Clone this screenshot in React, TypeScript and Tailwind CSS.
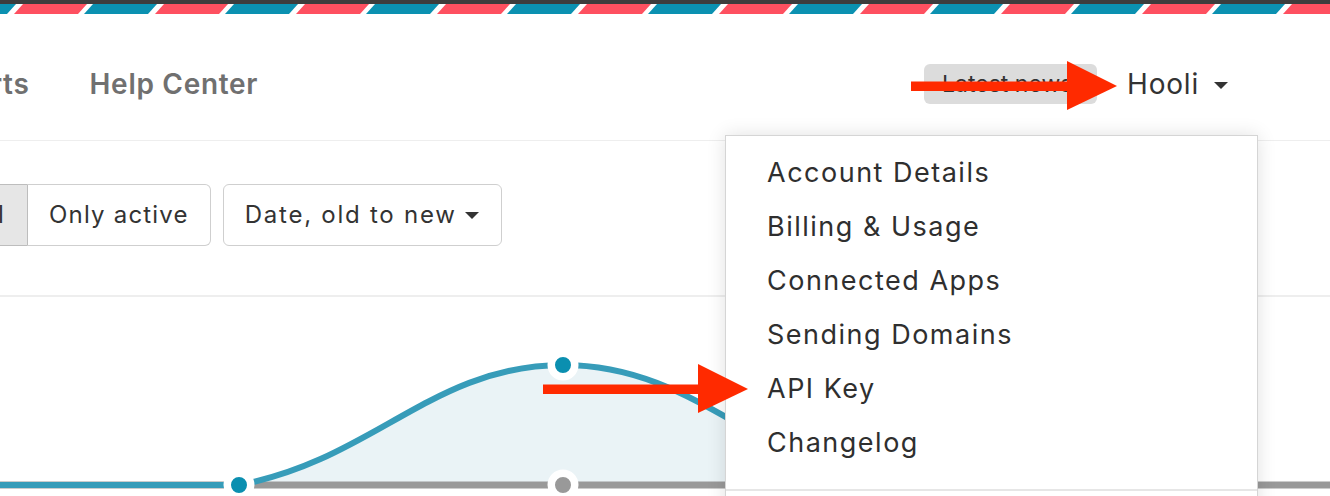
import React from 'react'

const menuItems = ['Account Details', 'Billing & Usage', 'Connected Apps', 'Sending Domains', 'API Key', 'Changelog']

function Stripes() {
  return (
    <svg className="block w-full h-[10px]" height="10">
      <defs>
        <pattern id="air" width="141" height="10" patternUnits="userSpaceOnUse">
          <polygon points="14,10 78,10 87,0 23,0" fill="#fe5060" />
          <polygon points="84,10 148,10 157,0 93,0" fill="#0b91b1" />
          <polygon points="-57,10 7,10 16,0 -48,0" fill="#0b91b1" />
        </pattern>
      </defs>
      <rect width="100%" height="10" fill="url(#air)" />
    </svg>
  )
}

function Caret({ className }: { className?: string }) {
  return (
    <svg className={className} viewBox="0 0 14 7" width="14" height="7">
      <polygon points="0,0 14,0 7,7" fill="#333" />
    </svg>
  )
}

function RedArrow({ className, w }: { className: string; w: number }) {
  // horizontal arrow, head 50px long and 49px tall
  return (
    <svg className={className} width={w} height="50" viewBox={`0 0 ${w} 50`}>
      <rect x="0" y="20.5" width={w - 48} height="9.5" fill="#ff2a00" />
      <polygon points={`${w - 50},0 ${w},25 ${w - 50},49`} fill="#ff2a00" />
    </svg>
  )
}

function Chart() {
  const curve = 'C373,462 433,367 563,367 C693,367 753,462 887,487'
  return (
    <svg className="block" width="1330" height="197" viewBox="0 299 1330 197">
      <path d={`M239,487 ${curve} Z`} fill="#eaf3f6" />
      <line x1="0" y1="487" x2="1330" y2="487" stroke="#999" strokeWidth="7" />
      <path d={`M0,487 L239,487 ${curve}`} fill="none" stroke="#379cb9" strokeWidth="6" />
      <circle cx="563" cy="487" r="11.75" fill="#999" stroke="#fff" strokeWidth="7.5" />
      <circle cx="239" cy="487" r="11.75" fill="#0b8fb0" stroke="#fff" strokeWidth="7.5" />
      <circle cx="563" cy="367" r="11.75" fill="#0b8fb0" stroke="#fff" strokeWidth="7.5" />
    </svg>
  )
}

export default function App() {
  return (
    <div className="relative w-[1330px] h-[496px] overflow-hidden bg-white font-['Inter',sans-serif]">
      <div className="h-[4px] bg-[#3d3d3d]" />
      <Stripes />

      {/* top nav */}
      <nav className="h-[127px] border-b border-[#eeeeee] flex items-center justify-between overflow-hidden pt-[14px]">
        <ul className="flex items-center gap-[60px] text-[28px] font-semibold text-[#707070] tracking-[0.7px]">
          <li className="-ml-[81px]">Reports</li>
          <li>Help Center</li>
        </ul>
        <div className="flex items-center mr-[102px]">
          <span className="h-[40px] w-[173px] rounded-[6px] bg-[#dcdcdc] text-[23px] text-[#333] flex items-center pl-[18px] overflow-hidden whitespace-nowrap">
            Latest news
          </span>
          <button className="ml-[30px] flex items-center gap-[15px] text-[28px] tracking-[0.8px] text-[#333]">
            Hooli
            <Caret className="mt-[2px]" />
          </button>
        </div>
      </nav>

      {/* filters */}
      <section className="h-[156px] border-b-2 border-[#eeeeee] flex items-start pt-[43px] overflow-hidden text-[24px] tracking-[1.2px] text-[#333]">
        <div className="flex -ml-[60px]">
          <span className="h-[62px] w-[88px] flex items-center justify-end pr-[22px] bg-[#e6e6e6] border border-[#bdbdbd] rounded-l-[6px]">All</span>
          <span className="h-[62px] flex items-center px-[21px] border border-l-0 border-[#cfcfcf] rounded-r-[6px]">Only active</span>
        </div>
        <button className="ml-[12px] h-[62px] flex items-center pl-[21px] pr-[22px] gap-[8px] border border-[#cfcfcf] rounded-[6px] tracking-[1.75px]">
          Date, old to new
          <Caret />
        </button>
      </section>

      <Chart />

      {/* account menu */}
      <div className="absolute left-[725px] top-[135px] w-[533px] h-[400px] bg-white border border-[#d5d5d5] shadow-[0_0_18px_rgba(0,0,0,0.12)]">
        <ul className="pt-[10px] pl-[41px] text-[27px] tracking-[1.5px] text-[#2f2f2f]">
          {menuItems.map(item => (
            <li key={item} className="h-[54px] flex items-center">{item}</li>
          ))}
        </ul>
        <div className="mt-[19px] border-t-2 border-[#e6e6e6]" />
      </div>

      {/* annotation arrows */}
      <RedArrow className="absolute left-[911px] top-[61px]" w={206} />
      <RedArrow className="absolute left-[543px] top-[364px]" w={205} />
    </div>
  )
}
